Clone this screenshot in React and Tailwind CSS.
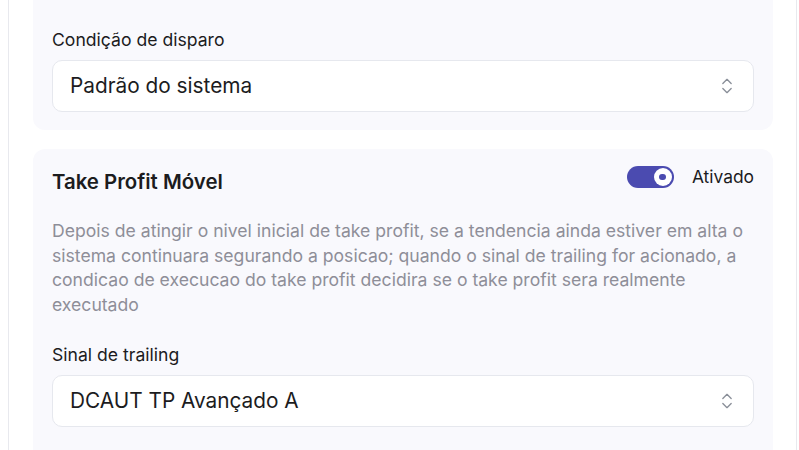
import { ChevronsUpDown } from "lucide-react";

function SelectBox({ value }) {
  return (
    <div className="flex h-[52px] items-center justify-between rounded-[10px] border border-[#e6e8ee] bg-white pl-[17px] pr-[16px]">
      <span className="text-[20.8px] text-[#1c1c1e]">{value}</span>
      <ChevronsUpDown size={20} strokeWidth={1.6} className="text-[#8a8f99]" />
    </div>
  );
}

function Toggle() {
  return (
    <div className="flex h-[22px] w-[47px] items-center justify-end rounded-full bg-[#4b4bb0] pr-[2px]">
      <div className="flex h-[18px] w-[18px] items-center justify-center rounded-full bg-white">
        <div className="h-[6px] w-[7px] rounded-full bg-[#4b4bb0]" />
      </div>
    </div>
  );
}

export default function App() {
  return (
    <div
      className="h-[450px] overflow-hidden bg-white"
      style={{ fontFamily: "Inter, 'Noto Sans', sans-serif" }}
    >
      <div className="ml-2 mr-[2px] flex h-full flex-col gap-[19px] border-x border-[#e8e9ee] pl-6 pr-[23px]">
        {/* disparo */}
        <div className="-mt-[21px] rounded-b-[12px] bg-[#f9f9fd] px-[19px] pb-[18px]">
          <p className="overflow-hidden whitespace-nowrap text-[17.6px] leading-[22px] text-[#8e8e98]">
            Executa a saida do alvo, conforme o nivel atual, e a ordem a partir do preço
          </p>
          <p className="mt-[27px] text-[17.6px] leading-6 text-[#1c1c1e]">Condição de disparo</p>
          <div className="mt-2">
            <SelectBox value="Padrão do sistema" />
          </div>
        </div>

        {/* take profit movel */}
        <div className="rounded-[12px] bg-[#f9f9fd] px-[19px] pt-4 pb-10">
          <div className="flex items-start justify-between">
            <h3 className="mt-[3px] text-[20.4px] font-semibold leading-7 text-[#1c1c1e]">
              Take Profit Móvel
            </h3>
            <div className="flex items-center gap-[18px]">
              <Toggle />
              <span className="text-[17.4px] leading-6 text-[#1c1c1e]">Ativado</span>
            </div>
          </div>
          <p className="mt-[23px] text-[17.6px] leading-[24.7px] text-[#8e8e98]">
            Depois de atingir o nivel inicial de take profit, se a tendencia ainda estiver em alta o
            sistema continuara segurando a posicao; quando o sinal de trailing for acionado, a
            condicao de execucao do take profit decidira se o take profit sera realmente executado
          </p>
          <p className="mt-[25px] text-[17.6px] leading-6 text-[#1c1c1e]">Sinal de trailing</p>
          <div className="mt-2">
            <SelectBox value="DCAUT TP Avançado A" />
          </div>
        </div>
      </div>
    </div>
  );
}
